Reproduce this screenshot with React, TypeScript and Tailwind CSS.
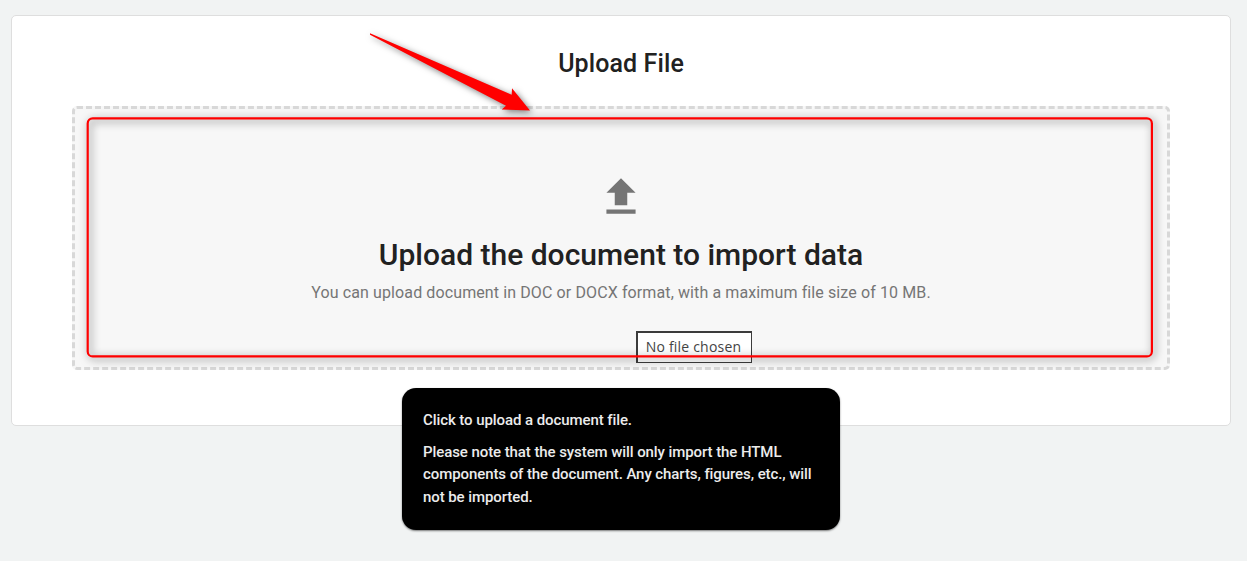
import type { ReactNode } from "react";
import { MdFileUpload } from "react-icons/md";

function Highlight() {
  return (
    <svg
      className="pointer-events-none absolute inset-0 overflow-visible drop-shadow-[2px_2px_4px_rgba(0,0,0,0.6)]"
      width="1092"
      height="258"
      viewBox="0 0 1092 258"
      fill="none"
    >
      <rect
        x="12.7"
        y="9.4"
        width="1064.2"
        height="238"
        rx="5"
        stroke="#ff0000"
        strokeWidth="2.2"
      />
    </svg>
  );
}

function Pointer() {
  return (
    <svg
      className="pointer-events-none absolute top-[4px] left-[348px] overflow-visible drop-shadow-[2px_2px_3px_rgba(0,0,0,0.5)]"
      width="180"
      height="100"
      viewBox="360 20 180 100"
    >
      <path
        d="M370 33.2L511.7 94.8L512 88.3L530 110.4L501.7 109.5L506 105.7L370 34.8Z"
        fill="#ff0000"
      />
    </svg>
  );
}

function Tooltip({ children }: { children: ReactNode }) {
  return (
    <div
      role="tooltip"
      className="absolute top-[372px] left-[390px] h-[142px] w-[438px] rounded-[14px] bg-black px-[21px] pt-[21.3px] text-[15px] leading-[22.5px] font-medium tracking-[-0.08px] text-[#ececec] shadow-[0_1px_2px_rgba(0,0,0,0.5)]"
    >
      {children}
    </div>
  );
}

export default function App() {
  return (
    <main className="h-[561px] overflow-hidden bg-[#f1f3f3] pt-[15px] pr-4 pl-[11px] font-[Roboto,sans-serif]">
      <section className="relative flex h-[411px] flex-col gap-[26px] rounded-[5px] border border-[#dedede] bg-white px-[60px] pt-8">
        <h1 className="text-center text-[25px] leading-8 font-medium tracking-[0.1px] text-[#212121]">
          Upload File
        </h1>

        <div className="relative flex h-[264px] flex-col items-center rounded-[5px] border-[3px] border-dashed border-[#d8d8d8] bg-[#f7f7f7] pt-[63px]">
          <MdFileUpload size={50} className="text-[#757575]" />
          <h2 className="mt-[15px] text-[30px] leading-9 font-medium text-[#212121]">
            Upload the document to import data
          </h2>
          <p className="mt-2 text-base leading-6 tracking-[0.11px] text-[#757575]">
            You can upload document in DOC or DOCX format, with a maximum file
            size of 10 MB.
          </p>
          <span className="mt-[26px] ml-[146px] flex h-[32px] w-[116px] items-center justify-center border-t-2 border-r border-b border-l-2 border-[#3c3c3c] bg-white pr-0.5 pb-0.5 font-['Open_Sans',sans-serif] text-[14px] tracking-[0.2px] whitespace-nowrap text-[#444]">
            No file chosen
          </span>
          <Highlight />
        </div>

        <Pointer />
        <Tooltip>
          <p>Click to upload a document file.</p>
          <p className="mt-[9px]">
            Please note that the system will only import the HTML components of
            the document. Any charts, figures, etc., will not be imported.
          </p>
        </Tooltip>
      </section>
    </main>
  );
}
